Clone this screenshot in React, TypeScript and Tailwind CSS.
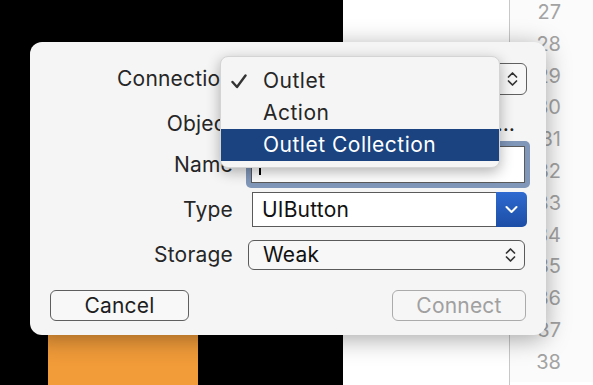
import React from 'react';

const font = { fontFamily: 'Inter, "Noto Sans", sans-serif' };

function UpDown() {
  return (
    <svg width="11" height="16" viewBox="0 0 11 16" fill="none">
      <path d="M1.5 6 L5.5 2 L9.5 6" stroke="#333" strokeWidth="1.7" strokeLinecap="round" strokeLinejoin="round" />
      <path d="M1.5 10 L5.5 14 L9.5 10" stroke="#333" strokeWidth="1.7" strokeLinecap="round" strokeLinejoin="round" />
    </svg>
  );
}

export default function App() {
  const lines = [27, 28, 29, 30, 31, 32, 33, 34, 35, 36, 37, 38];

  return (
    <div className="relative w-[593px] h-[385px] overflow-hidden flex text-[#262626]" style={font}>
      {/* background editor */}
      <div className="w-[343px] h-full bg-black relative">
        <div className="absolute left-[48px] top-[335px] w-[150px] h-[60px] bg-[#f19b39]" />
      </div>
      <div className="w-[167px] h-full bg-white border-r border-[#c8c8c8]" />
      <div className="flex-1 h-full bg-[#fbfbfb] flex flex-col items-end pr-[32px] -mt-[3px]">
        {lines.map(n => (
          <div key={n} className="h-[31.8px] leading-[31.8px] text-[20px] text-[#a3a3a3]">{n}</div>
        ))}
      </div>

      {/* dialog */}
      <div className="absolute left-[30px] top-[42px] w-[516px] h-[293px] rounded-[12px] bg-[#f5f5f5] shadow-[0_4px_24px_rgba(0,0,0,0.35)] pt-[21px] text-[21px] tracking-[0.2px]">
        <div className="flex items-center h-[32px]">
          <div className="w-[203px] text-right">Connection</div>
          <div className="ml-[15px] w-[279px] h-[32px] rounded-[6px] border-[1.5px] border-[#606060] bg-[#f7f7f7] flex items-center justify-end pr-[8px]">
            <UpDown />
          </div>
        </div>
        <div className="flex items-center h-[32px] mt-[13px]">
          <div className="w-[203px] text-right">Object</div>
          <div className="ml-[33px] w-[249px] whitespace-nowrap overflow-hidden text-right">View Controller Do…</div>
        </div>
        <div className="flex items-center h-[47px] mt-[1px]">
          <div className="w-[203px] text-right">Name</div>
          <div className="ml-[13px] w-[284px] h-[47px] rounded-[5px] bg-[#8097b9] p-[5px]">
            <div className="w-full h-full bg-white border border-[#5a5a5a] flex items-center pl-[7px]">
              <div className="w-[2px] h-[20px] bg-black" />
            </div>
          </div>
        </div>
        <div className="flex items-center h-[35px] mt-[4px]">
          <div className="w-[203px] text-right">Type</div>
          <div className="ml-[19px] w-[275px] h-[35px] flex">
            <div className="flex-1 bg-white border-[1.5px] border-r-0 border-[#5a5a5a] flex items-center pl-[9px] text-[#111]">UIButton</div>
            <div className="w-[31px] h-full rounded-r-[5px] bg-gradient-to-b from-[#2e6ad0] to-[#1d4ea6] flex items-center justify-center">
              <svg width="13" height="9" viewBox="0 0 13 9" fill="none">
                <path d="M1.5 2 L6.5 7 L11.5 2" stroke="#fff" strokeWidth="2" strokeLinecap="round" strokeLinejoin="round" />
              </svg>
            </div>
          </div>
        </div>
        <div className="flex items-center h-[30px] mt-[13px]">
          <div className="w-[203px] text-right">Storage</div>
          <div className="ml-[15px] w-[277px] h-[30px] rounded-[6px] border-[1.5px] border-[#5a5a5a] bg-[#f7f7f7] flex items-center justify-between pl-[14px] pr-[8px] text-[#111]">
            <span>Weak</span>
            <UpDown />
          </div>
        </div>
        <div className="flex items-center justify-between h-[31px] mt-[20px] px-[20px]">
          <div className="w-[139px] h-[31px] rounded-[6px] border-[1.5px] border-[#5f5f5f] bg-[#f8f8f8] flex items-center justify-center text-[#1e1e1e]">Cancel</div>
          <div className="w-[134px] h-[31px] rounded-[6px] border-[1.5px] border-[#ababab] bg-[#f6f6f6] flex items-center justify-center text-[#a0a0a0]">Connect</div>
        </div>
      </div>

      {/* popup menu */}
      <div className="absolute left-[220px] top-[56px] w-[280px] h-[112px] rounded-[8px] bg-[#f5f5f5] border border-[#d4d4d4] shadow-[0_4px_14px_rgba(0,0,0,0.3)] py-[8px] text-[21px] tracking-[0.5px]">
        <div className="relative h-[32px] flex items-center pl-[42px]">
          <svg className="absolute left-[10px] top-[9px]" width="16" height="15" viewBox="0 0 16 15" fill="none">
            <path d="M1.5 8 L6 13 L14.5 1.5" stroke="#333" strokeWidth="2.4" strokeLinecap="round" strokeLinejoin="round" />
          </svg>
          Outlet
        </div>
        <div className="h-[32px] flex items-center pl-[42px]">Action</div>
        <div className="h-[32px] flex items-center pl-[42px] bg-[#1a437f] text-white">Outlet Collection</div>
      </div>
    </div>
  );
}
